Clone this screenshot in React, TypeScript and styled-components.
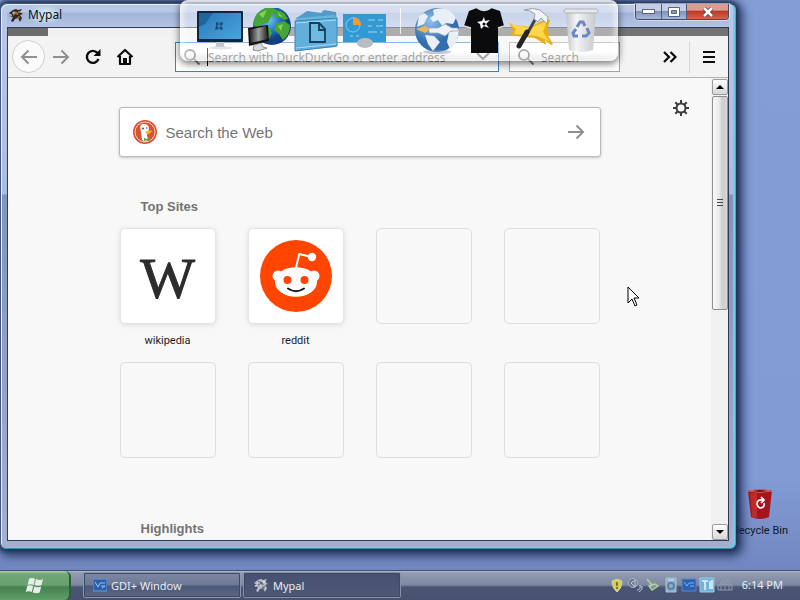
import React from "react";
import styled, { createGlobalStyle, css } from "styled-components";

const uiFont = `"Noto Sans", "Open Sans", sans-serif`;
const labelFont = `Roboto, "Noto Sans", sans-serif`;

const GlobalStyle = createGlobalStyle`
  * { box-sizing: border-box; }
  body { margin: 0; font-family: ${uiFont}; }
  button { font: inherit; padding: 0; border: 0; background: none; color: inherit; }
  svg { display: block; flex: none; }
`;

const Desktop = styled.div`
  height: 100vh;
  display: flex;
  flex-direction: column;
  position: relative;
  overflow: hidden;
  background: linear-gradient(180deg, #839dd6 0%, #829bd5 80%, #7085be 96%);
`;

const Workspace = styled.main`
  flex: 1;
  display: flex;
  padding: 3px 64px 21px 0;
  min-height: 0;
`;

/* ---------- browser window ---------- */

const BrowserWindow = styled.section`
  flex: 1;
  min-width: 0;
  display: flex;
  flex-direction: column;
  position: relative;
  z-index: 1;
  padding: 0 6px 7px;
  border: 1px solid #42567f;
  border-right-color: #2fb4da;
  border-bottom-color: #3c93a8;
  border-radius: 7px 7px 6px 6px;
  background: linear-gradient(180deg, #b9c8e6 0, #a9bbe0 190px, #8194bd 191px, #a3b0cf 100%);
  box-shadow: inset 1px 1px 0 #e6eefa, inset -2px -1px 0 #74cde8,
    0 0 4px 2px #203050, 3px 3px 10px 4px rgba(20, 35, 75, 0.75);
`;

const TitleBar = styled.header`
  height: 23px;
  display: flex;
  justify-content: space-between;
  align-items: flex-start;
  background: linear-gradient(180deg, transparent 0 8px, rgba(110, 135, 190, 0.3) 9px, rgba(150, 175, 220, 0.1) 100%);
`;

const Title = styled.h1`
  display: flex;
  align-items: center;
  gap: 4px;
  margin: 0;
  padding: 2px 0 0 1px;
  font-size: 12px;
  line-height: 18px;
  font-weight: 400;
  color: #0c1020;
`;

const TitleText = styled.span`
  background: radial-gradient(ellipse, rgba(225, 248, 245, 0.9) 0, rgba(190, 228, 235, 0) 75%);
`;

const Caption = styled.div`
  display: flex;
  height: 16px;
  border: 1px solid #404c68;
  border-top: 0;
  border-radius: 0 0 4px 4px;
  overflow: hidden;
  box-shadow: 0 0 0 1px rgba(255, 255, 255, 0.45);
`;

const CaptionButton = styled.button<{ $close?: boolean }>`
  width: ${(p) => (p.$close ? 42 : 25)}px;
  display: grid;
  place-items: center;
  background: linear-gradient(180deg, #c3cee4 0 45%, #8193b8 50%, #a6b7d8);
  & + & { border-left: 1px solid #505e7e; }
  ${(p) =>
    p.$close &&
    css`
      background: linear-gradient(180deg, #dc9c90 0 40%, #bd3a28 50%, #d8624a);
    `}
`;

const Client = styled.div`
  flex: 1;
  min-height: 0;
  display: flex;
  flex-direction: column;
  border: 1px solid #303b5c;
  background: #f9f9fa;
`;

const TabStrip = styled.div`
  height: 8px;
  flex: none;
  background: linear-gradient(90deg, #6c6c6c 0 40px, #f1f1f1 40px 39%, #737373 39%);
`;

const Toolbar = styled.nav`
  display: flex;
  flex: none;
  align-items: center;
  height: 42px;
  padding: 0 3px 0 4px;
  background: #f3f3f3;
  border-bottom: 1px solid #b3b3b3;
`;

const ToolButton = styled.button<{ $round?: boolean }>`
  width: 32px;
  height: 32px;
  display: grid;
  place-items: center;
  color: #0c0c0d;
  &:disabled { color: #8f8f8f; }
  ${(p) =>
    p.$round &&
    css`
      width: 33px;
      height: 33px;
      border: 1px solid #d0d0d0;
      border-radius: 50%;
      background: #fafafa;
    `}
`;

const Field = styled.label<{ $main?: boolean }>`
  height: 30px;
  display: flex;
  align-items: center;
  gap: 6px;
  padding: 0 8px 0 7px;
  background: #fff;
  border: 1px solid ${(p) => (p.$main ? "#3584cc" : "#a2a2a2")};
  color: #858585;
  ${(p) =>
    p.$main
      ? css`
          flex: 1;
          margin: 0 10px 0 34px;
        `
      : css`
          width: 111px;
          margin-right: 34px;
        `}
`;

const FieldInput = styled.input<{ $caret?: boolean }>`
  flex: 1;
  min-width: 0;
  height: 18px;
  padding: 1px 0 0;
  border: 0;
  border-left: ${(p) => (p.$caret ? "1px solid #000" : "0")};
  outline: 0;
  background: none;
  font: 12px/17px ${uiFont};
  &::placeholder { color: #767676; opacity: 1; }
`;

const ToolSeparator = styled.div`
  width: 1px;
  height: 32px;
  margin: 0 3px;
  background: #d8d8d8;
`;

const Viewport = styled.div`
  flex: 1;
  min-height: 0;
  display: flex;
  overflow: hidden;
`;

/* ---------- new tab page ---------- */

const Page = styled.div`
  flex: 1;
  min-width: 0;
  position: relative;
  overflow: hidden;
  padding-top: 29px;
  background: #f8f8f8;
`;

const Settings = styled.button`
  position: absolute;
  top: 21px;
  right: 21px;
`;

const Column = styled.div`
  width: 482px;
  max-width: 100%;
  margin: 0 auto;
`;

const WebSearch = styled.form`
  height: 50px;
  display: flex;
  align-items: center;
  gap: 9px;
  padding: 0 8px 0 13px;
  background: #fff;
  border: 1px solid #bababa;
  border-radius: 3px;
  box-shadow: 0 1px 3px rgba(0, 0, 0, 0.2);
`;

const WebInput = styled.input`
  flex: 1;
  min-width: 0;
  padding: 2px 0 0;
  border: 0;
  outline: 0;
  background: none;
  font: 15px/20px "Liberation Sans", Arial, sans-serif;
  &::placeholder { color: #757575; opacity: 1; }
`;

const SectionTitle = styled.h2<{ $first?: boolean }>`
  margin: ${(p) => (p.$first ? 42 : 25)}px 0 13px 22px;
  font: bold 13px/16px "Liberation Sans", Arial, sans-serif;
  color: #737373;
`;

const Sites = styled.div`
  display: grid;
  grid-template-columns: repeat(4, 96px);
  column-gap: 32px;
  padding-left: 1px;
`;

const Site = styled.a`
  height: 134px;
  font: 11px/16px ${labelFont};
  text-align: center;
  text-decoration: none;
  color: #1c1c1f;
`;

const Tile = styled.span<{ $filled?: boolean }>`
  display: grid;
  place-items: center;
  height: 96px;
  margin-bottom: 9px;
  border: 1px solid ${(p) => (p.$filled ? "#e4e4e4" : "#dddddd")};
  border-radius: 5px;
  ${(p) =>
    p.$filled &&
    css`
      background: #fff;
      box-shadow: 0 1px 5px rgba(0, 0, 0, 0.13);
    `}
`;

const WikiMark = styled.span`
  padding-top: 6px;
  font: 58px/58px "Liberation Serif", serif;
  -webkit-text-stroke: 1px #2c2c2c;
  color: #2c2c2c;
`;

/* ---------- scroll bar ---------- */

const ScrollBar = styled.div`
  width: 17px;
  display: flex;
  flex-direction: column;
  padding: 1px 0 0 1px;
  background: #f0f0ef;
`;

const ScrollButton = styled.button`
  height: 16px;
  display: grid;
  place-items: center;
  border: 1px solid #9b9b9b;
  border-radius: 2px;
  background: linear-gradient(180deg, #fff, #d7d7d7);
`;

const ScrollTrack = styled.div`
  flex: 1;
  padding-top: 1px;
`;

const ScrollThumb = styled.div`
  height: 50%;
  display: grid;
  place-items: center;
  border: 1px solid #8f8f8f;
  border-radius: 2px;
  background: linear-gradient(90deg, #f8f8f8 0, #ececec 40%, #cccccc 70%, #d8d8d8);
`;

/* ---------- dock ---------- */

const Dock = styled.aside`
  position: absolute;
  z-index: 2;
  top: 0;
  left: 50%;
  transform: translateX(-50%);
  margin-left: -1px;
  height: 61px;
  display: flex;
  align-items: flex-start;
  padding: 6px 14px 0 16px;
  border: solid rgba(255, 255, 255, 0.75);
  border-width: 2px 0 0 0;
  border-radius: 8px;
  background: linear-gradient(180deg, rgba(255, 255, 255, 0.42) 0 50px, rgba(190, 190, 190, 0.35) 100%);
  box-shadow: 0 2px 7px 1px rgba(0, 0, 0, 0.5), inset 4px 0 5px rgba(255, 255, 255, 0.5),
    inset -4px 0 5px rgba(255, 255, 255, 0.5);
  pointer-events: none;
`;

const DockItem = styled.button`
  width: 48px;
  height: 48px;
`;

const DockDivider = styled.div`
  width: 24px;
  height: 26px;
  display: flex;
  justify-content: center;
  &::before {
    content: "";
    width: 1px;
    background: rgba(255, 255, 255, 0.8);
  }
`;

/* ---------- desktop icon, pointer, task bar ---------- */

const DesktopIcon = styled.a`
  position: absolute;
  right: 4px;
  bottom: 61px;
  width: 72px;
  display: flex;
  flex-direction: column;
  align-items: center;
  gap: 3px;
  font: 11px/16px ${labelFont};
  white-space: nowrap;
  text-decoration: none;
  color: #101828;
`;

const Pointer = styled.svg`
  position: absolute;
  z-index: 3;
  left: 627px;
  top: 286px;
`;

const TaskBar = styled.footer`
  height: 30px;
  flex: none;
  display: flex;
  align-items: stretch;
  border-top: 1px solid #46516f;
  background: linear-gradient(180deg, #b0bace 0, #919bb2 2px, #7d88a2 14px, #4a5574 16px, #46526f 100%);
  color: #e8ecf4;
  font-size: 11px;
`;

const Start = styled.button`
  width: 71px;
  display: grid;
  place-items: center;
  border-right: 2px solid #2d5d3c;
  border-radius: 0 6px 6px 0;
  background: linear-gradient(180deg, #b0d3ae 0, #72a778 3px, #69a070 14px, #47804f 16px, #5fa067 100%);
`;

const Tasks = styled.div`
  flex: 1;
  min-width: 0;
  display: flex;
  gap: 2px;
  padding: 1px 0 2px 12px;
`;

const Task = styled.button<{ $active?: boolean }>`
  width: 158px;
  display: flex;
  align-items: center;
  gap: 4px;
  padding-left: 9px;
  border: 1px solid ${(p) => (p.$active ? "#8792aa" : "#8d98b0")};
  border-radius: 2px;
  outline: 1px solid #3d4864;
  outline-offset: -2px;
  background: ${(p) =>
    p.$active
      ? "linear-gradient(180deg, #465170, #4d5876)"
      : "linear-gradient(180deg, #7e8aa4 0, #6c7894 50%, #4c5878 54%, #5b6784 100%)"};
`;

const Tray = styled.div`
  display: flex;
  align-items: center;
  gap: 2px;
  padding: 0 17px 2px 0;
`;

const Clock = styled.time`
  margin-left: 7px;
  white-space: nowrap;
`;

/* ---------- drawings ---------- */

const Fox = ({ pale }: { pale?: boolean }) => (
  <svg width="16" height="16" viewBox="0 0 16 16">
    <path d="M1 6l4-3 3-1 2 1 4-1-2 3 3 2-3 1 2 3-2 4-2-4-3 1-2 3-2-1 2-4-4-1 3-1z" fill={pale ? "#b9bcc3" : "#302824"} />
    <path d="M5 4l4 1 2 3-4-1-2 2zM9 10l3-1-1 3z" fill={pale ? "#5f6679" : "#a9743e"} />
    <path d="M4 6h3M10 5h3M2 9l2-1" stroke={pale ? "#eef" : "#d7c6a8"} />
  </svg>
);

const Arrow = ({ left }: { left?: boolean }) => (
  <svg width="18" height="16" viewBox="0 0 18 16" fill="none" stroke="currentColor" strokeWidth="2">
    <path d={left ? "M17 8H2M8.500 1.500L2 8l6.500 6.500" : "M1 8h15M9.500 1.500L16 8l-6.500 6.500"} />
  </svg>
);

const Glass = () => (
  <svg width="18" height="18" viewBox="0 0 18 18" fill="none" stroke="#777" strokeWidth="1.800">
    <circle cx="7" cy="7" r="5" />
    <path d="M10.800 10.800L16.500 16.500" />
  </svg>
);

const Duck = () => (
  <svg width="24" height="24" viewBox="0 0 24 24">
    <circle cx="12" cy="12" r="12" fill="#d8532f" />
    <circle cx="12" cy="12" r="10" fill="#d8532f" stroke="#f6d5ca" strokeWidth="1" />
    <path d="M9 20L7.500 9C6.500 6 8 4 10.500 4l2 .2c3 .8 4 3 3 7L14 15l1 5-3 1.500z" fill="#fff" />
    <path d="M12.500 12c3-2 5-1.500 7-1-1 1.200-3 1.500-2.500 2.500-1.500.8-5 .5-4.500-1.500z" fill="#f5b522" />
    <path d="M11 18l3 1 3-1.500V21l-3-1-3 1z" fill="#59a43f" />
    <circle cx="10" cy="8.500" r="1" fill="#456" /><circle cx="13.800" cy="8" r=".8" fill="#456" />
  </svg>
);

const Reddit = () => (
  <svg width="72" height="72" viewBox="0 0 72 72">
    <circle cx="36" cy="36" r="36" fill="#ff4500" />
    <path d="M36 28l3.200-14 12.500 3" fill="none" stroke="#fff" strokeWidth="2" strokeLinejoin="round" />
    <circle cx="52" cy="17" r="4.200" fill="#fff" />
    <circle cx="18" cy="36" r="5.500" fill="#fff" /><circle cx="54" cy="36" r="5.500" fill="#fff" />
    <ellipse cx="36" cy="42" rx="21" ry="14.800" fill="#fff" />
    <circle cx="27.500" cy="40" r="4" fill="#ff4500" /><circle cx="44.500" cy="40" r="4" fill="#ff4500" />
    <path d="M28 48.500q8 5.500 16 0" fill="none" stroke="#161616" strokeWidth="2" strokeLinecap="round" />
  </svg>
);

const Gear = () => (
  <svg width="18" height="18" viewBox="0 0 18 18" fill="none" stroke="#3c3c3e" strokeWidth="2">
    <circle cx="9" cy="9" r="4.500" />
    <path d="M9 1v3M9 14v3M1 9h3M14 9h3M3.300 3.300l2.200 2.200M12.500 12.500l2.200 2.200M3.300 14.700l2.200-2.200M12.500 5.500l2.200-2.200" />
  </svg>
);

const DisplayIcon = () => (
  <svg width="48" height="48" viewBox="0 0 48 48">
    <defs><linearGradient id="screen" x2="1" y2="1"><stop stopColor="#2a78b6" /><stop offset="1" stopColor="#48a6e0" /></linearGradient></defs>
    <path d="M20 33h8v5l4 2H16l4-2z" fill="#bfc6cd" />
    <ellipse cx="25" cy="40" rx="12" ry="1.500" fill="#e1e4e8" />
    <rect x="1" y="3" width="46" height="31" rx="1" fill="#10263a" />
    <path d="M3 5h42v26H3z" fill="url(#screen)" />
    <path d="M3 5h14L9 16l-6 3z" fill="#1e669d" />
    <path d="M20 14l3 1 4-1-1 4 1 4-4-1-4 1 1-4z" fill="#174c78" />
    <path d="M21 18h5M23 15v6" stroke="#3f97d2" />
  </svg>
);

const NetworkIcon = () => (
  <svg width="48" height="48" viewBox="0 0 48 48">
    <defs>
      <radialGradient id="earth" cx=".4" cy=".35"><stop stopColor="#7cc8f5" /><stop offset=".6" stopColor="#2076c6" /><stop offset="1" stopColor="#123f82" /></radialGradient>
      <linearGradient id="tower"><stop stopColor="#151515" /><stop offset=".5" stopColor="#a0a0a0" /><stop offset="1" stopColor="#202020" /></linearGradient>
    </defs>
    <circle cx="28" cy="18" r="19" fill="url(#earth)" />
    <path d="M12 7Q19-1 28-1l5 4-5 4-4 8-6 1-4 5-5-5zM32 2q9 1 12 9l-4 1-5-3-5 1zM32 16l8-3 6 4q0 10-7 15l-4-6-5-4zM20 18l6 2 2 5-4 8-4-5z" fill="#47a536" />
    <path d="M15 6l8-4-4 8zM34 4l5 5-4-1zM34 18l5-2-2 7z" fill="#9be15d" opacity=".75" />
    <path d="M4 20l20-3 1 16-20 5z" fill="#111" /><path d="M5 22l17-4 2 13-17 4z" fill="url(#tower)" />
    <path d="M10 37l7-2 2 4 4 1-9 3-5-1z" fill="#d7dadd" stroke="#555" strokeWidth=".6" />
  </svg>
);

const FolderIcon = () => (
  <svg width="48" height="48" viewBox="0 0 48 48">
    <path d="M3 11L15 3l14 2 3-3 12 2 1 11z" fill="#519ac9" />
    <path d="M3 13l4-3 35-3 3 3-1 29-40 4z" fill="#68b5df" />
    <path d="M3 13l42-3v28L3 43z" fill="#62afdb" stroke="#3b88b6" />
    <path d="M4 15l40-3M4 40l40-4" stroke="#a8daf2" />
    <path d="M18 15h9l6 6v13H18zM27 15v7h6" fill="#70b9df" stroke="#143e5b" strokeWidth="1.800" />
  </svg>
);

const PanelIcon = () => (
  <svg width="48" height="48" viewBox="0 0 48 48">
    <rect x="3" y="6" width="43" height="28" fill="#3499d3" />
    <circle cx="13" cy="17" r="7" fill="none" stroke="#86cbed" /><path d="M13 17V9a8 8 0 018 8z" fill="#f29c38" />
    <path d="M28 12h7M38 12h5M28 18h4M36 18h7M28 24h9M40 24h3M10 28h3M16 28h3" stroke="#9fd6f3" strokeWidth="1" />
    <ellipse cx="25" cy="35" rx="8" ry="5" fill="#b9bdc1" />
  </svg>
);

const InternetIcon = () => (
  <svg width="48" height="48" viewBox="0 0 48 48">
    <defs><radialGradient id="web" cx=".35" cy=".3"><stop stopColor="#91c0ee" /><stop offset="1" stopColor="#326ead" /></radialGradient></defs>
    <circle cx="25" cy="22" r="22" fill="url(#web)" />
    <path d="M21 2q15-5 23 8l-3 6-7-1-3 4-5-7-5 2-3-4 4-3zM7 8l5-3 4 3-4 8-7 3zM13 27l9 1 6 6-7 9-5-7zM37 24l10-3q0 13-9 20l-3-7z" fill="#e8eff6" />
    <path d="M4 21l9-3 6 3-6 4z" fill="#e9b957" /><path d="M17 20h9l7-4 7 4h6v3h-7l-6 5-7-3h-9z" fill="#eef2f6" stroke="#92a5b8" strokeWidth=".7" />
    <ellipse cx="25" cy="44" rx="14" ry="2" fill="#8797b3" opacity=".5" />
  </svg>
);

const ShirtIcon = () => (
  <svg width="48" height="48" viewBox="0 0 48 48">
    <path d="M17 0q7 5 14 0l9 3 4 15-6 2v25H11V20l-7-2L9 3z" fill="#0b0b0d" />
    <path d="M17 0q7 5 14 0M4 18l7 2M38 20l6-2" fill="none" stroke="#ddd" strokeWidth="1.500" />
    <path d="M24 9l1 4 5-1-4 4 3 4-5-2-3 3-1-5-3-2 5-1z" fill="#fff" /><circle cx="24" cy="16" r="1.500" fill="#0b0b0d" />
  </svg>
);

const ToolsIcon = () => (
  <svg width="48" height="48" viewBox="0 0 48 48">
    <path d="M1 15l5 2 16 2L38 11l4 1-3 11 3 4-2 1 5 8-2 1-6-5 1 5-11-7-11-1-14-2 3-5z" fill="#e9ae18" />
    <path d="M2 16l20 4L39 13l-4 11 6 9-12-5-11-1-12-1 2-5z" fill="#ffd84a" />
    <path d="M29 8L18 28" stroke="#3f4449" strokeWidth="3" />
    <path d="M19 24L11 38" stroke="#252525" strokeWidth="5" strokeLinecap="round" />
    <path d="M16 2q9-3 16 0l8 7-1 7-6-6-3 4-4-3 1-5-5-3z" fill="#f2f4f6" stroke="#96a2ab" />
  </svg>
);

const BinIcon = () => (
  <svg width="48" height="48" viewBox="0 0 48 48">
    <defs><linearGradient id="bin"><stop stopColor="#c3c6c9" /><stop offset=".35" stopColor="#f3f4f5" /><stop offset="1" stopColor="#c6cacd" /></linearGradient></defs>
    <path d="M10 5h30l-3 37q-12 4-24 0z" fill="url(#bin)" />
    <rect x="8" y="1" width="34" height="4" rx="2" fill="#e6e8ea" stroke="#b1b5b9" />
    <g fill="none" stroke="#6c87c4" strokeWidth="3"><path d="M21 19l3-5h3l2 4M31 20l2 5-3 3h-4M22 28h-4l-1-3 3-4" /></g>
  </svg>
);

const RecycleIcon = () => (
  <svg width="26" height="32" viewBox="0 0 26 32">
    <path d="M1 3l24-1-3 27q-9 4-18 0z" fill="#a5141b" />
    <path d="M3 5h7v25l-5-1z" fill="#c02a2a" /><path d="M1 3q12-3 24 0-12 3-24 0z" fill="#670b11" stroke="#de5a52" />
    <path d="M16 12q-6-1-6 4 1 4 4 4 4-1 3-5M14 9l3 3-3 3" fill="none" stroke="#fff" strokeWidth="1.700" />
  </svg>
);

const WindowsFlag = () => (
  <svg width="20" height="18" viewBox="0 0 20 18" fill="#e4efe9">
    <path d="M4 2q3-2 6 0L8.500 8q-3-1.500-6 0zM11 2q4 2 7 0l-1.500 6q-3 1.500-7 0zM2.200 9q3-1.500 6 0L6.800 15q-3-1.500-6 0zM9.200 9.500q4 1.500 7 0l-1.500 6q-3 1.500-7 0z" />
  </svg>
);

const AppIcon = () => (
  <svg width="14" height="14" viewBox="0 0 14 14">
    <path d="M0 1h14v12H0z" fill="#2c5fac" stroke="#6c98d0" />
    <path d="M2 4l3 5 2-4h5M8 8h4l-3 2" fill="none" stroke="#9cc3ec" />
  </svg>
);

const trayDrawings: React.ReactNode[] = [
  <><path d="M8 2l5 2q0 7-5 11Q3 11 3 4z" fill="#d8ce58" stroke="#c9d2b1" /><path d="M8 5v4M8 10v2" stroke="#5e5c28" strokeWidth="1.500" /></>,
  <><circle cx="6" cy="6" r="4.500" fill="#69768f" stroke="#aab5c8" /><path d="M4 6l4-3v7zM10 13q4 0 3-5M12 15q4-2 3-6" fill="none" stroke="#c5cedd" /></>,
  <><path d="M3 5l10-1-2 7-6 1z" fill="#828f9d" /><path d="M2 2l4 5 3 1M4 9l6-2 3 2-6 4z" fill="none" stroke="#afd09e" strokeWidth="1.500" /></>,
  <><path d="M3 1h10v14H3z" fill="#8eafca" stroke="#a9c2d8" /><circle cx="8" cy="9" r="3" fill="none" stroke="#5a82a6" strokeWidth="2" /><path d="M5 3h6" stroke="#e2eef7" /></>,
  <><path d="M1 2h14v12H1z" fill="#2861b5" stroke="#6187bd" /><path d="M3 5l3 4 2-3h5M9 9h4" fill="none" stroke="#86b2e6" /></>,
  <><path d="M1 1h14v14H1z" fill="#72b3dc" stroke="#9accea" /><path d="M3 4h6M6 4v9M11 4v8M13 3v9" fill="none" stroke="#e6f6ff" strokeWidth="1.500" /></>,
  <path d="M1 8h14v5H1zM4 8V5h3v3M9 8V4h4v4M5 3l2-2M10 3l3-2M4 13V9M8 13V9M12 13V9" fill="none" stroke="#929caf" />,
];

const dockLeft = [
  { name: "Computer", icon: <DisplayIcon /> },
  { name: "Network", icon: <NetworkIcon /> },
  { name: "Documents", icon: <FolderIcon /> },
  { name: "Control panel", icon: <PanelIcon /> },
];
const dockRight = [
  { name: "Internet", icon: <InternetIcon /> },
  { name: "Themes", icon: <ShirtIcon /> },
  { name: "Tools", icon: <ToolsIcon /> },
  { name: "Recycle bin", icon: <BinIcon /> },
];

const sites: { name: string; art: React.ReactNode }[] = [
  { name: "wikipedia", art: <WikiMark>W</WikiMark> },
  { name: "reddit", art: <Reddit /> },
  ...Array.from({ length: 6 }, () => ({ name: "", art: null })),
];

export default function App() {
  return (
    <Desktop>
      <GlobalStyle />
      <Workspace>
        <BrowserWindow>
          <TitleBar>
            <Title><Fox /><TitleText>Mypal</TitleText></Title>
            <Caption>
              <CaptionButton aria-label="Minimize">
                <svg width="13" height="5"><rect x=".5" y=".5" width="12" height="4" fill="#fff" stroke="#59647f" /></svg>
              </CaptionButton>
              <CaptionButton aria-label="Maximize">
                <svg width="12" height="10"><path d="M.5.5h11v9H.5z" fill="#fff" stroke="#59647f" /><path d="M3.500 3.500h5v3h-5z" fill="#8b9cbb" stroke="#59647f" /></svg>
              </CaptionButton>
              <CaptionButton $close aria-label="Close">
                <svg width="12" height="10" viewBox="0 0 12 10"><path d="M2 1l8 8M10 1L2 9" stroke="#68353a" strokeWidth="4" /><path d="M2 1l8 8M10 1L2 9" stroke="#fff" strokeWidth="2.500" /></svg>
              </CaptionButton>
            </Caption>
          </TitleBar>
          <Client>
            <TabStrip />
            <Toolbar>
              <ToolButton $round disabled aria-label="Back"><Arrow left /></ToolButton>
              <ToolButton disabled aria-label="Forward"><Arrow /></ToolButton>
              <ToolButton aria-label="Reload">
                <svg width="18" height="18" viewBox="0 0 18 18"><path d="M14.500 11a6 6 0 11-1-6" fill="none" stroke="currentColor" strokeWidth="2.400" /><path d="M16.500 1v7h-7z" fill="currentColor" /></svg>
              </ToolButton>
              <ToolButton aria-label="Home">
                <svg width="18" height="18" viewBox="0 0 18 18" fill="none" stroke="currentColor" strokeWidth="2.200" strokeLinejoin="round"><path d="M1.500 9L9 2l7.500 7M4 8v8h10V8" /><path d="M7 15.500V10h4v5.500z" fill="currentColor" stroke="none" /></svg>
              </ToolButton>
              <Field $main>
                <Glass />
                <FieldInput $caret aria-label="Address" placeholder="Search with DuckDuckGo or enter address" />
                <svg width="14" height="9" viewBox="0 0 14 9" fill="none" stroke="#777" strokeWidth="2"><path d="M1 1l6 6 6-6" /></svg>
              </Field>
              <Field>
                <Glass />
                <FieldInput aria-label="Search" placeholder="Search" />
              </Field>
              <ToolButton aria-label="More tools">
                <svg width="14" height="12" viewBox="0 0 14 12" fill="none" stroke="currentColor" strokeWidth="2.200"><path d="M1 1l5 5-5 5M7.500 1l5 5-5 5" /></svg>
              </ToolButton>
              <ToolSeparator />
              <ToolButton aria-label="Menu">
                <svg width="12" height="12" viewBox="0 0 12 12" stroke="currentColor" strokeWidth="2"><path d="M0 1h12M0 6h12M0 11h12" /></svg>
              </ToolButton>
            </Toolbar>
            <Viewport>
              <Page>
                <Settings aria-label="Settings"><Gear /></Settings>
                <Column>
                  <WebSearch>
                    <Duck />
                    <WebInput aria-label="Search the Web" placeholder="Search the Web" />
                    <ToolButton type="button" disabled aria-label="Go"><Arrow /></ToolButton>
                  </WebSearch>
                  <SectionTitle $first>Top Sites</SectionTitle>
                  <Sites>
                    {sites.map((site, i) => (
                      <Site key={i} href="#">
                        <Tile $filled={!!site.art}>{site.art}</Tile>
                        {site.name}
                      </Site>
                    ))}
                  </Sites>
                  <SectionTitle>Highlights</SectionTitle>
                </Column>
              </Page>
              <ScrollBar>
                <ScrollButton aria-label="Scroll up"><svg width="8" height="4"><path d="M0 4l4-4 4 4z" /></svg></ScrollButton>
                <ScrollTrack>
                  <ScrollThumb><svg width="6" height="8" stroke="#444"><path d="M0 .5h6M0 3.500h6M0 6.500h6" /></svg></ScrollThumb>
                </ScrollTrack>
                <ScrollButton aria-label="Scroll down"><svg width="8" height="4"><path d="M0 0l4 4 4-4z" /></svg></ScrollButton>
              </ScrollBar>
            </Viewport>
          </Client>
        </BrowserWindow>
      </Workspace>

      <DesktopIcon href="#"><RecycleIcon />Recycle Bin</DesktopIcon>

      <Dock>
        {dockLeft.map((d) => <DockItem key={d.name} aria-label={d.name}>{d.icon}</DockItem>)}
        <DockDivider />
        {dockRight.map((d) => <DockItem key={d.name} aria-label={d.name}>{d.icon}</DockItem>)}
      </Dock>

      <Pointer width="13" height="21" viewBox="0 0 13 21">
        <path d="M1 1v16l4-4 3 7 2-1-3-7h5z" fill="#fff" stroke="#000" />
      </Pointer>

      <TaskBar>
        <Start aria-label="Start"><WindowsFlag /></Start>
        <Tasks>
          <Task><AppIcon />GDI+ Window</Task>
          <Task $active><Fox pale />Mypal</Task>
        </Tasks>
        <Tray>
          {trayDrawings.map((d, i) => <svg key={i} width="16" height="16" viewBox="0 0 16 16">{d}</svg>)}
          <Clock>6:14 PM</Clock>
        </Tray>
      </TaskBar>
    </Desktop>
  );
}
